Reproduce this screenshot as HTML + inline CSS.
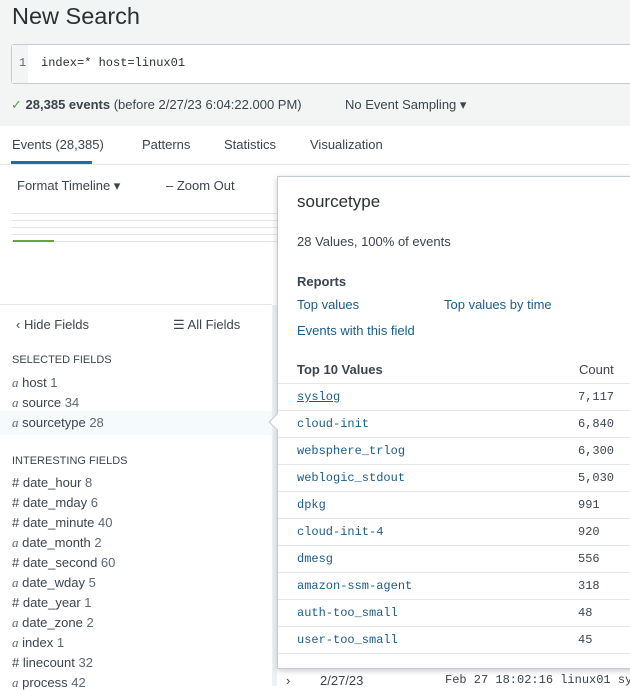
<!DOCTYPE html><html><head><style>
*{margin:0;padding:0;box-sizing:border-box}
body{width:630px;height:686px;overflow:hidden;background:#fff;font-family:"Liberation Sans",sans-serif;color:#3c444d;position:relative;font-size:13px}
.a{position:absolute;white-space:nowrap}
.mono{font-family:"Liberation Mono",monospace;font-size:12px}
.link{color:#1a5c8c}
.f{position:absolute;left:12px;font-size:13px;color:#3c444d}
.f i{font-family:"Liberation Serif",serif;color:#5c6773}
.f span{color:#5c6773}
.row{position:absolute;left:0;width:353px;height:27px;border-top:1px solid #e1e6eb}
.row .v{position:absolute;left:19px;top:6px;color:#1a5c8c}
.row .c{position:absolute;left:300px;top:6px;color:#3c444d}
</style></head><body>
<div class="a" style="left:0;top:0;width:630px;height:126px;background:#f2f5f3"></div>
<div class="a" style="left:12px;top:3px;font-size:23.5px;color:#2b3033">New Search</div>
<div class="a" style="left:11px;top:44px;width:630px;height:40px;background:#fff;border:1px solid #c3cbd4;border-radius:3px"></div>
<div class="a" style="left:12px;top:45px;width:16px;height:38px;background:#f2f5f3"></div>
<div class="a mono" style="left:19px;top:56px;color:#5c6773">1</div>
<div class="a mono" style="left:41px;top:56px;color:#2b3033">index=* host=linux01</div>
<div class="a" style="left:11px;top:97px;color:#3c444d"><span style="color:#5a9e3a">✓</span> <b>28,385 events</b> (before 2/27/23 6:04:22.000 PM)</div>
<div class="a" style="left:345px;top:97px">No Event Sampling ▾</div>
<div class="a" style="left:12px;top:137px">Events (28,385)</div>
<div class="a" style="left:142px;top:137px">Patterns</div>
<div class="a" style="left:224px;top:137px">Statistics</div>
<div class="a" style="left:310px;top:137px">Visualization</div>
<div class="a" style="left:11px;top:161px;width:81px;height:3px;background:#1a6fa8"></div>
<div class="a" style="left:0;top:164px;width:630px;height:1px;background:#e1e6eb"></div>
<div class="a" style="left:17px;top:178px">Format Timeline ▾</div>
<div class="a" style="left:166px;top:178px">– Zoom Out</div>
<div class="a" style="left:12px;top:207px;width:265px;height:36px;background:repeating-linear-gradient(#fff 0 6px,#e1e6eb 6px 7px)"></div>
<div class="a" style="left:13px;top:240px;width:41px;height:2px;background:#65a637"></div>
<div class="a" style="left:0;top:304px;width:272px;height:1px;background:#e1e6eb"></div>
<div class="a" style="left:272px;top:305px;width:5px;height:381px;background:#eef1f3"></div>
<div class="a" style="left:16px;top:317px">‹ Hide Fields</div>
<div class="a" style="left:173px;top:317px">☰ All Fields</div>
<div class="a" style="left:12px;top:354px;font-size:11px;color:#3c444d">SELECTED FIELDS</div>
<div class="f" style="top:375px"><i>a</i> host <span>1</span></div>
<div class="f" style="top:395px"><i>a</i> source <span>34</span></div>
<div class="a" style="left:0;top:411px;width:272px;height:24px;background:#f5fafc"></div>
<div class="f" style="top:415px"><i>a</i> sourcetype <span>28</span></div>
<div class="a" style="left:12px;top:455px;font-size:11px">INTERESTING FIELDS</div>
<div class="f" style="top:475px"># date_hour <span>8</span></div>
<div class="f" style="top:495px"># date_mday <span>6</span></div>
<div class="f" style="top:515px"># date_minute <span>40</span></div>
<div class="f" style="top:535px"><i>a</i> date_month <span>2</span></div>
<div class="f" style="top:555px"># date_second <span>60</span></div>
<div class="f" style="top:575px"><i>a</i> date_wday <span>5</span></div>
<div class="f" style="top:595px"># date_year <span>1</span></div>
<div class="f" style="top:615px"><i>a</i> date_zone <span>2</span></div>
<div class="f" style="top:635px"><i>a</i> index <span>1</span></div>
<div class="f" style="top:655px"># linecount <span>32</span></div>
<div class="f" style="top:675px"><i>a</i> process <span>42</span></div>
<div class="a" style="left:286px;top:673px">›</div>
<div class="a" style="left:320px;top:673px">2/27/23</div>
<div class="a mono" style="left:445px;top:673px">Feb 27 18:02:16 linux01 sys</div>
<div class="a" style="left:277px;top:176px;width:360px;height:493px;background:#fff;border:1px solid #c3cbd4;box-shadow:0 2px 6px rgba(0,0,0,.2)">
 <div class="a" style="left:-7px;top:239px;width:12px;height:12px;background:#fff;border-left:1px solid #c3cbd4;border-bottom:1px solid #c3cbd4;transform:rotate(45deg)"></div>
 <div class="a" style="left:19px;top:15px;font-size:17px;color:#2b3033">sourcetype</div>
 <div class="a" style="left:19px;top:57px">28 Values, 100% of events</div>
 <div class="a" style="left:19px;top:97px;font-weight:bold">Reports</div>
 <div class="a link" style="left:19px;top:120px">Top values</div>
 <div class="a link" style="left:166px;top:120px">Top values by time</div>
 <div class="a link" style="left:19px;top:146px">Events with this field</div>
 <div class="a" style="left:19px;top:185px;font-weight:bold">Top 10 Values</div>
 <div class="a" style="left:301px;top:185px">Count</div>
 <div class="row mono" style="top:206px"><div class="v" style="text-decoration:underline">syslog</div><div class="c">7,117</div></div>
 <div class="row mono" style="top:233px"><div class="v">cloud-init</div><div class="c">6,840</div></div>
 <div class="row mono" style="top:260px"><div class="v">websphere_trlog</div><div class="c">6,300</div></div>
 <div class="row mono" style="top:287px"><div class="v">weblogic_stdout</div><div class="c">5,030</div></div>
 <div class="row mono" style="top:314px"><div class="v">dpkg</div><div class="c">991</div></div>
 <div class="row mono" style="top:341px"><div class="v">cloud-init-4</div><div class="c">920</div></div>
 <div class="row mono" style="top:368px"><div class="v">dmesg</div><div class="c">556</div></div>
 <div class="row mono" style="top:395px"><div class="v">amazon-ssm-agent</div><div class="c">318</div></div>
 <div class="row mono" style="top:422px"><div class="v">auth-too_small</div><div class="c">48</div></div>
 <div class="row mono" style="top:449px"><div class="v">user-too_small</div><div class="c">45</div></div>
 <div class="row" style="top:476px;height:1px"></div>
</div>
</body></html>
